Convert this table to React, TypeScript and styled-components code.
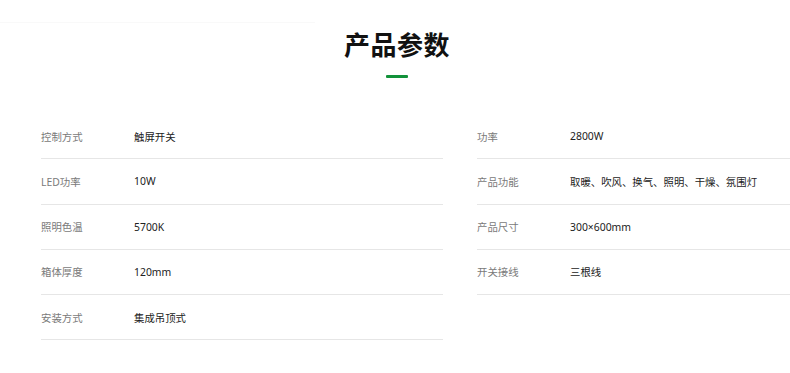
import React from 'react';
import styled, { createGlobalStyle } from 'styled-components';

const GlobalStyle = createGlobalStyle`
  html, body {
    margin: 0;
    padding: 0;
    background: #fff;
    overflow: hidden;
  }
  body {
    font-family: "Noto Sans", "Noto Sans CJK SC", sans-serif;
  }
`;

const Page = styled.section`
  width: 790px;
  height: 373px;
  position: relative;
  overflow: hidden;
`;

const FaintRule = styled.div`
  position: absolute;
  left: 0;
  top: 22px;
  width: 315px;
  height: 1px;
  background: #f9f9f9;
`;

const Header = styled.header`
  display: flex;
  flex-direction: column;
  align-items: center;
  padding-top: 26px;
  padding-left: 4px;
`;

const Title = styled.h2`
  margin: 0;
  font-size: 26px;
  line-height: 38px;
  font-weight: 700;
  color: #111;
  letter-spacing: 0.5px;
`;

const Accent = styled.div`
  width: 22px;
  height: 3px;
  margin-top: 11px;
  background: #12923a;
  border-radius: 1px;
`;

const Grid = styled.div`
  display: grid;
  grid-template-columns: 402px 1fr;
  column-gap: 34px;
  padding: 36px 0 0 41px;
  align-items: start;
`;

const Column = styled.div`
  display: flex;
  flex-direction: column;
`;

const Row = styled.div`
  display: flex;
  align-items: center;
  height: 44.25px;
  border-bottom: 1px solid #e6e6e6;
  font-size: 10.4px;
`;

const Label = styled.span`
  width: 93px;
  flex-shrink: 0;
  color: #7a7a7a;
`;

const Value = styled.span`
  color: #222;
`;

const left: [string, string][] = [
  ['控制方式', '触屏开关'],
  ['LED功率', '10W'],
  ['照明色温', '5700K'],
  ['箱体厚度', '120mm'],
  ['安装方式', '集成吊顶式'],
];

const right: [string, string][] = [
  ['功率', '2800W'],
  ['产品功能', '取暖、吹风、换气、照明、干燥、氛围灯'],
  ['产品尺寸', '300×600mm'],
  ['开关接线', '三根线'],
];

export default function App() {
  return (
    <>
      <GlobalStyle />
      <Page>
        <FaintRule />
        <Header>
          <Title>产品参数</Title>
          <Accent />
        </Header>
        <Grid>
          <Column>
            {left.map(([k, v]) => (
              <Row key={k}>
                <Label>{k}</Label>
                <Value>{v}</Value>
              </Row>
            ))}
          </Column>
          <Column>
            {right.map(([k, v]) => (
              <Row key={k}>
                <Label>{k}</Label>
                <Value>{v}</Value>
              </Row>
            ))}
          </Column>
        </Grid>
      </Page>
    </>
  );
}
